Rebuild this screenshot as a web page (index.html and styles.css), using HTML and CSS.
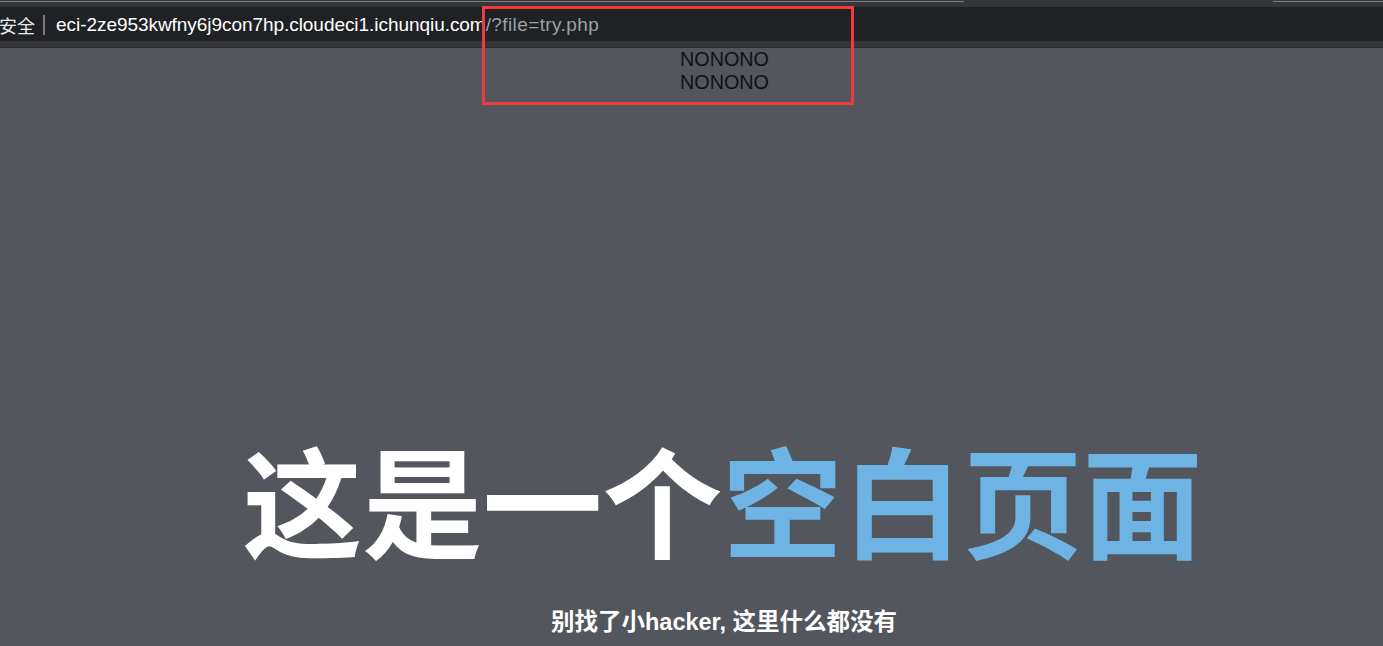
FILE: index.html
```html
<!DOCTYPE html>
<html lang="zh-CN">
<head>
<meta charset="utf-8">
<title>这是一个空白页面</title>
<link rel="stylesheet" href="styles.css">
</head>
<body>
<div class="chrome">
  <div class="tabstrip">
    <span class="tab-edge tab-left"></span>
    <span class="tab-edge tab-right"></span>
  </div>
  <div class="addressbar">
    <span class="secure">安全</span>
    <span class="sep"></span>
    <span class="url"><span class="host">eci-2ze953kwfny6j9con7hp.cloudeci1.ichunqiu.com</span><span class="path">/?file=try.php</span></span>
  </div>
  <div class="toolbar-bottom"></div>
</div>
<main class="page">
  <div class="output">
    <div>NONONO</div>
    <div>NONONO</div>
  </div>
  <div class="hero">
    <h1 class="title">这是一个<span class="accent">空白页面</span></h1>
    <p class="subtitle">别找了小hacker, 这里什么都没有</p>
  </div>
</main>
<div class="highlight"></div>
</body>
</html>
```
FILE: styles.css
```css
html, body {
  margin: 0;
  padding: 0;
}
body {
  width: 1383px;
  height: 646px;
  overflow: hidden;
  background: #53565c;
  font-family: "Liberation Sans", "Noto Sans CJK SC", sans-serif;
  position: relative;
}
.chrome {
  display: flex;
  flex-direction: column;
}
.tabstrip {
  height: 7px;
  background: #35363a;
  display: flex;
  justify-content: space-between;
  align-items: flex-start;
}
.tab-edge {
  display: block;
  height: 1px;
  margin-top: 1px;
  background: #7d8084;
}
.tab-left {
  width: 964px;
  border-bottom-right-radius: 2px;
}
.tab-right {
  width: 110px;
}
.addressbar {
  height: 34px;
  background: #202124;
  display: flex;
  align-items: center;
  font-size: 19px;
  color: #e8eaed;
  white-space: nowrap;
  padding-top: 1px;
  box-sizing: border-box;
}
.secure {
  font-family: "Noto Sans CJK SC", sans-serif;
  font-size: 18px;
  margin-left: -1px;
}
.sep {
  width: 2px;
  height: 20px;
  background: #7a7c80;
  margin: 0 11px 0 8px;
}
.url {
  letter-spacing: -0.05px;
}
.host {
  color: #ffffff;
}
.path {
  color: #9aa0a6;
  letter-spacing: 0.4px;
}
.toolbar-bottom {
  height: 6px;
  background: #35363a;
  border-bottom: 1px solid #28292c;
}
.page {
  padding-left: 62px;
  display: flex;
  flex-direction: column;
  align-items: center;
}
.output {
  font-size: 19.8px;
  line-height: 23px;
  color: #111214;
  text-align: center;
  padding-left: 4px;
}
.hero {
  margin-top: 334px;
  display: flex;
  flex-direction: column;
  align-items: center;
}
.title {
  margin: 0;
  font-family: "Noto Sans CJK SC", sans-serif;
  font-weight: 700;
  font-size: 120px;
  line-height: 140px;
  color: #ffffff;
  white-space: nowrap;
}
.accent {
  color: #6db4e4;
}
.subtitle {
  margin: 40px 0 0;
  font-family: "Liberation Sans", "Noto Sans CJK SC", sans-serif;
  font-weight: 700;
  font-size: 23.5px;
  line-height: 28px;
  color: #ffffff;
  padding-left: 3px;
}
.highlight {
  position: absolute;
  left: 482px;
  top: 6px;
  width: 366px;
  height: 93px;
  border: 3px solid #ef3b3f;
}
```
